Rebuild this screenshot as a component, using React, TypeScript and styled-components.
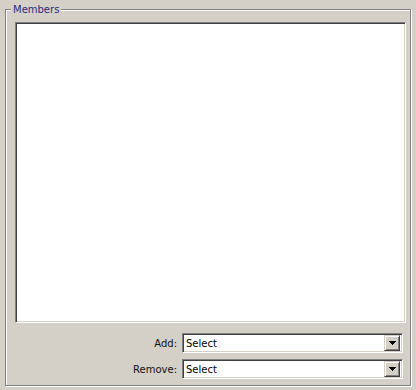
import React from 'react'
import styled, { createGlobalStyle } from 'styled-components'

const GlobalStyle = createGlobalStyle`
  html, body {
    margin: 0;
    padding: 0;
    background: #d4d0c8;
  }

  body {
    font-family: 'DejaVu Sans', Verdana, sans-serif;
    font-size: 10px;
    color: #000;
  }
`

const Page = styled.div`
  height: 390px;
  padding: 3px 0 0 5px;
  box-sizing: border-box;
`

const GroupBox = styled.fieldset`
  box-sizing: border-box;
  width: 406px;
  margin: 0;
  padding: 6px 4px 6px 9px;
  border: 1px solid #808080;
  box-shadow: inset 1px 1px 0 #fff, 1px 1px 0 #fff;
  display: flex;
  flex-direction: column;
  min-width: 0;
`

const Caption = styled.legend`
  margin-left: -4px;
  padding: 0 2px;
  line-height: 13px;
  font-size: 10px;
  color: #2b2a7e;
  background: #d4d0c8;
`

const ListBox = styled.div`
  box-sizing: border-box;
  height: 301px;
  background: #fff;
  border: 1px solid;
  border-color: #808080 #fff #fff #808080;
  box-shadow: inset 1px 1px 0 #404040, inset -1px -1px 0 #d4d0c8;
`

const Fields = styled.div`
  display: flex;
  flex-direction: column;
  gap: 6px;
  margin-top: 10px;
  padding-right: 3px;
`

const FieldRow = styled.div`
  display: grid;
  grid-template-columns: 1fr 221px;
  column-gap: 5px;
  align-items: center;
`

const Label = styled.label`
  text-align: right;
  color: #111;
`

const Combo = styled.div`
  box-sizing: border-box;
  height: 20px;
  display: flex;
  align-items: center;
  background: #fff;
  border: 1px solid;
  border-color: #808080 #fff #fff #808080;
  box-shadow: inset 1px 1px 0 #404040, inset -1px -1px 0 #d4d0c8;
  padding: 1px 2px 1px 2px;
`

const ComboText = styled.span`
  flex: 1;
  padding: 1px 0 0 1px;
  line-height: 16px;
`

const DropButton = styled.span`
  box-sizing: border-box;
  width: 16px;
  height: 16px;
  display: flex;
  align-items: center;
  justify-content: center;
  background: #d4d0c8;
  border: 1px solid;
  border-color: #d4d0c8 #404040 #404040 #d4d0c8;
  box-shadow: inset 1px 1px 0 #fff, inset -1px -1px 0 #808080;
`

const Arrow = () => (
  <svg width="7" height="4" viewBox="0 0 7 4">
    <path d="M0 0h7v1h-1v1h-1v1h-1v1h-1v-1h-1v-1h-1v-1h-1z" fill="#000" />
  </svg>
)

const ComboBox = ({ value }: { value: string }) => (
  <Combo>
    <ComboText>{value}</ComboText>
    <DropButton>
      <Arrow />
    </DropButton>
  </Combo>
)

export default function App() {
  return (
    <>
      <GlobalStyle />
      <Page>
        <GroupBox>
          <Caption>Members</Caption>
          <ListBox />
          <Fields>
            <FieldRow>
              <Label>Add:</Label>
              <ComboBox value="Select" />
            </FieldRow>
            <FieldRow>
              <Label>Remove:</Label>
              <ComboBox value="Select" />
            </FieldRow>
          </Fields>
        </GroupBox>
      </Page>
    </>
  )
}
